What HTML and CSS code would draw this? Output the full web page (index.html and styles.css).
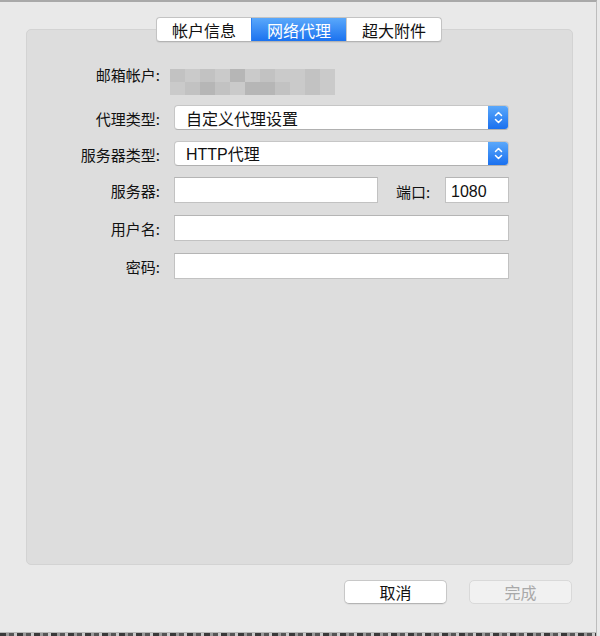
FILE: index.html
```html
<!DOCTYPE html>
<html lang="zh-CN">
<head>
  <meta charset="UTF-8">
  <title>网络代理</title>
  <link rel="stylesheet" href="styles.css">
</head>
<body>

<div class="prefs-window">
  <div class="prefs-panel">
    <div class="prefs-tabs">
      <span class="prefs-tab">帐户信息</span>
      <span class="prefs-tab active">网络代理</span>
      <span class="prefs-tab">超大附件</span>
    </div>

    <div class="prefs-form">
      <div class="prefs-row prefs-row-top">
        <label class="prefs-label">邮箱帐户:</label>
        <div class="prefs-mosaic">
          <i class="m2"></i><i class="m1"></i><i class="m2"></i><i class="m1"></i><i class="m3"></i><i class="m1"></i><i class="m2"></i><i class="m1"></i><i class="m1"></i><i class="m2"></i><i class="m1"></i>
          <i class="m1"></i><i class="m2"></i><i class="m3"></i><i class="m2"></i><i class="m1"></i><i class="m3"></i><i class="m3"></i><i class="m2"></i><i class="m1"></i><i class="m2"></i><i class="m1"></i>
        </div>
      </div>

      <div class="prefs-row">
        <label class="prefs-label">代理类型:</label>
        <div class="prefs-popup">
          <span class="prefs-popup-text">自定义代理设置</span>
          <span class="prefs-popup-arrow">
            <svg width="9" height="15" viewBox="0 0 9 15"><path d="M1.5 5.5 L4.5 2.5 L7.5 5.5 M1.5 9.5 L4.5 12.5 L7.5 9.5" fill="none" stroke="#fff" stroke-width="1.5" stroke-linecap="round" stroke-linejoin="round"/></svg>
          </span>
        </div>
      </div>

      <div class="prefs-row">
        <label class="prefs-label">服务器类型:</label>
        <div class="prefs-popup">
          <span class="prefs-popup-text latin">HTTP代理</span>
          <span class="prefs-popup-arrow">
            <svg width="9" height="15" viewBox="0 0 9 15"><path d="M1.5 5.5 L4.5 2.5 L7.5 5.5 M1.5 9.5 L4.5 12.5 L7.5 9.5" fill="none" stroke="#fff" stroke-width="1.5" stroke-linecap="round" stroke-linejoin="round"/></svg>
          </span>
        </div>
      </div>

      <div class="prefs-row prefs-row-input">
        <label class="prefs-label">服务器:</label>
        <div class="prefs-server">
          <input class="prefs-input prefs-input-server" type="text">
          <label class="prefs-port-label">端口:</label>
          <input class="prefs-input prefs-input-port" type="text" value="1080">
        </div>
      </div>

      <div class="prefs-row prefs-row-input">
        <label class="prefs-label">用户名:</label>
        <input class="prefs-input" type="text">
      </div>

      <div class="prefs-row prefs-row-input">
        <label class="prefs-label">密码:</label>
        <input class="prefs-input" type="password">
      </div>
    </div>
  </div>

  <div class="prefs-buttons">
    <button class="prefs-btn">取消</button>
    <button class="prefs-btn disabled">完成</button>
  </div>

  <div class="prefs-under"></div>
</div>

</body>
</html>
```

FILE: styles.css
```css
body {
  margin: 0;
  background: #e9e9e9;
  font-family: "Liberation Sans", "Noto Sans CJK SC", sans-serif;
  font-size: 14px;
  color: #222;
}

.prefs-window {
  width: 597px;
  height: 636px;
  box-sizing: border-box;
  border-top: 2px solid #a9a9a9;
  border-right: 1px solid #bdbdbd;
  background: #e9e9e9;
  display: flex;
  flex-direction: column;
}

.prefs-panel {
  margin: 27px 23px 0 26px;
  height: 536px;
  box-sizing: border-box;
  background: #dddddd;
  border: 1px solid #d3d3d3;
  border-radius: 5px;
}

.prefs-tabs {
  display: flex;
  width: 286px;
  height: 25px;
  margin: -13px 0 0 129px;
  box-sizing: border-box;
  background: #fff;
  border: 1px solid #c3c3c3;
  border-bottom-color: #b3b3b3;
  border-radius: 4px;
  overflow: hidden;
  box-shadow: 0 1px 1px rgba(0, 0, 0, 0.06);
}

.prefs-tab {
  flex: 1;
  display: flex;
  align-items: center;
  justify-content: center;
  font-family: "Noto Sans CJK SC", sans-serif;
  font-size: 16px;
  color: #111;
  border-left: 1px solid #c9c9c9;
}

.prefs-tab:first-child {
  border-left: none;
}

.prefs-tab.active {
  background: linear-gradient(#5aa8fb, #1b72ef);
  color: #fff;
  border-left-color: #2d7ff0;
}

.prefs-form {
  display: flex;
  flex-direction: column;
  margin-top: 21px;
}

.prefs-row {
  display: flex;
  align-items: center;
  height: 25px;
  margin-bottom: 11px;
}

.prefs-row-top {
  align-items: flex-start;
  height: 32px;
  margin-bottom: 10px;
}

.prefs-row-top .prefs-label {
  padding-top: 2px;
}

.prefs-row-input {
  height: 26px;
  margin-bottom: 12px;
}

.prefs-label {
  width: 133px;
  margin-right: 14px;
  padding-top: 2px;
  text-align: right;
  font-family: "Noto Sans CJK SC", sans-serif;
  font-size: 15px;
  line-height: 20px;
  color: #111;
}

.prefs-mosaic {
  display: grid;
  grid-template-columns: repeat(11, 15px);
  grid-template-rows: 13px 13px;
  margin: 6px 0 0 -4px;
  filter: blur(0.6px);
}

.prefs-mosaic .m1 { background: #cacaca; }
.prefs-mosaic .m2 { background: #c2c2c2; }
.prefs-mosaic .m3 { background: #b6b6b6; }

.prefs-popup {
  display: flex;
  width: 335px;
  height: 25px;
  box-sizing: border-box;
  background: #fff;
  border: 1px solid #c6c6c6;
  border-bottom-color: #b0b0b0;
  border-radius: 4px;
  overflow: hidden;
}

.prefs-popup-text {
  flex: 1;
  padding: 1px 0 0 11px;
  font-family: "Noto Sans CJK SC", sans-serif;
  font-size: 16px;
  line-height: 23px;
  color: #111;
}

.prefs-popup-text.latin {
  font-family: "Liberation Sans", "Noto Sans CJK SC", sans-serif;
}

.prefs-popup-arrow {
  width: 20px;
  display: flex;
  align-items: center;
  justify-content: center;
  background: linear-gradient(#5aa8fb, #1a70ef);
}

.prefs-server {
  display: flex;
  align-items: center;
  width: 335px;
}

.prefs-input {
  width: 335px;
  height: 26px;
  box-sizing: border-box;
  margin: 0;
  padding: 3px 5px 0;
  background: #fff;
  border: 1px solid #c2c2c2;
  border-top-color: #b5b5b5;
  border-radius: 0;
  outline: none;
  font-family: "Liberation Sans", sans-serif;
  font-size: 16px;
  color: #111;
}

.prefs-input-server {
  width: 204px;
}

.prefs-port-label {
  margin-left: 18px;
  padding-top: 2px;
  font-family: "Noto Sans CJK SC", sans-serif;
  font-size: 15px;
  color: #111;
}

.prefs-input-port {
  width: 64px;
  margin-left: auto;
}

.prefs-buttons {
  display: flex;
  justify-content: flex-end;
  gap: 22px;
  margin: 15px 24px 0 0;
}

.prefs-btn {
  width: 103px;
  height: 24px;
  padding: 0;
  background: #fff;
  border: 1px solid #c8c8c8;
  border-bottom-color: #b4b4b4;
  border-radius: 5px;
  font-family: "Noto Sans CJK SC", sans-serif;
  font-size: 16px;
  line-height: 22px;
  color: #111;
  box-shadow: 0 1px 1px rgba(0, 0, 0, 0.05);
}

.prefs-btn.disabled {
  background: #f1f1f1;
  border-color: #d9d9d9;
  color: #a9a9a9;
  box-shadow: none;
}

.prefs-under {
  margin-top: auto;
  height: 3px;
  background: repeating-linear-gradient(90deg, #3a3a3a 0 6px, #9a9a9a 6px 9px, #555 9px 14px, #c8c8c8 14px 17px);
  border-top: 1px solid #b8b8b8;
}
```
